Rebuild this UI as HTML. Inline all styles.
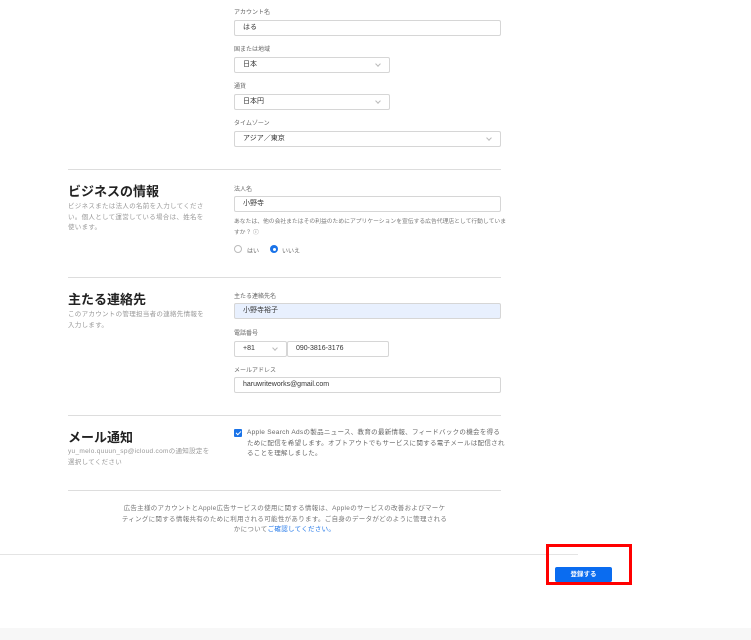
<!DOCTYPE html>
<html><head><meta charset="utf-8"><style>
*{margin:0;padding:0;box-sizing:border-box}
body{width:751px;height:640px;background:#fff;position:relative;overflow:hidden;font-family:"Liberation Sans","Noto Sans CJK JP",sans-serif;color:#333}
.a{position:absolute;white-space:nowrap}
.lb{font-size:6px;color:#666}
.in{position:absolute;height:16px;border:1px solid #d6d6d6;border-radius:2px;font-size:7px;color:#333;padding-left:8px;line-height:14px;background:#fff}
.chev{position:absolute;right:9px;top:4px;width:4px;height:4px;border-right:1px solid #bbb;border-bottom:1px solid #bbb;transform:rotate(45deg)}
.hr{position:absolute;height:1px;background:#ddd}
.t{font-size:13px;font-weight:bold;color:#222}
.d{font-size:6.5px;color:#999;line-height:10.5px;letter-spacing:0.3px}
</style></head><body>
<div class="a lb" style="left:234px;top:7px">アカウント名</div>
<div class="in" style="left:234px;top:20px;width:267px">はる</div>
<div class="a lb" style="left:234px;top:44px">国または地域</div>
<div class="in" style="left:234px;top:57px;width:156px">日本<span class="chev"></span></div>
<div class="a lb" style="left:234px;top:81px">通貨</div>
<div class="in" style="left:234px;top:94px;width:156px">日本円<span class="chev"></span></div>
<div class="a lb" style="left:234px;top:118px">タイムゾーン</div>
<div class="in" style="left:234px;top:131px;width:267px">アジア／東京<span class="chev"></span></div>
<div class="hr" style="left:68px;top:169px;width:433px"></div>

<div class="a t" style="left:68px;top:181px">ビジネスの情報</div>
<div class="a d" style="left:68px;top:202px">ビジネスまたは法人の名前を入力してくださ<br>い。個人として運営している場合は、姓名を<br>使います。</div>
<div class="a lb" style="left:234px;top:184px">法人名</div>
<div class="in" style="left:234px;top:196px;width:267px">小野寺</div>
<div class="a d" style="left:234px;top:217px;color:#777;font-size:5.8px;letter-spacing:0">あなたは、他の会社またはその利益のためにアプリケーションを宣伝する広告代理店として行動していま<br>すか？ ⓘ</div>
<div class="a" style="left:234px;top:245px;width:8px;height:8px;border:1px solid #bbb;border-radius:50%"></div>
<div class="a lb" style="left:247px;top:246px">はい</div>
<div class="a" style="left:270px;top:245px;width:8px;height:8px;background:#1a73e8;border-radius:50%"><div style="position:absolute;left:2.5px;top:2.5px;width:3px;height:3px;background:#fff;border-radius:50%"></div></div>
<div class="a lb" style="left:282px;top:246px">いいえ</div>
<div class="hr" style="left:68px;top:277px;width:433px"></div>

<div class="a t" style="left:68px;top:289px">主たる連絡先</div>
<div class="a d" style="left:68px;top:310px">このアカウントの管理担当者の連絡先情報を<br>入力します。</div>
<div class="a lb" style="left:234px;top:291px">主たる連絡先名</div>
<div class="in" style="left:234px;top:303px;width:267px;background:#e8f0fe">小野寺裕子</div>
<div class="a lb" style="left:234px;top:328px">電話番号</div>
<div class="in" style="left:234px;top:341px;width:53px">+81<span class="chev"></span></div>
<div class="in" style="left:287px;top:341px;width:102px">090-3816-3176</div>
<div class="a lb" style="left:234px;top:365px">メールアドレス</div>
<div class="in" style="left:234px;top:377px;width:267px">haruwriteworks@gmail.com</div>
<div class="hr" style="left:68px;top:415px;width:433px"></div>

<div class="a t" style="left:68px;top:427px">メール通知</div>
<div class="a d" style="left:68px;top:447px">yu_melo.quuun_sp@icloud.comの通知設定を<br>選択してください</div>
<div class="a" style="left:234px;top:429px;width:8px;height:8px;background:#1a73e8;border-radius:1px"><div style="position:absolute;left:2.5px;top:0.5px;width:3px;height:5px;border-right:1.3px solid #fff;border-bottom:1.3px solid #fff;transform:rotate(45deg)"></div></div>
<div class="a d" style="left:247px;top:428px;color:#666">Apple Search Adsの製品ニュース、教育の最新情報、フィードバックの機会を得る<br>ために配信を希望します。オプトアウトでもサービスに関する電子メールは配信され<br>ることを理解しました。</div>
<div class="hr" style="left:68px;top:490px;width:433px"></div>

<div class="a d" style="left:118px;top:504px;width:333px;text-align:center;color:#777">広告主様のアカウントとApple広告サービスの使用に関する情報は、Appleのサービスの改善およびマーケ<br>ティングに関する情報共有のために利用される可能性があります。ご自身のデータがどのように管理される<br>かについて<span style="color:#1a73e8">ご確認してください。</span></div>
<div class="hr" style="left:0;top:554px;width:578px;background:#e4e4e4"></div>
<div class="a" style="left:555px;top:567px;width:57px;height:15px;background:#0a6cf0;border-radius:2px;color:#fff;font-size:6.5px;font-weight:bold;text-align:center;line-height:15px">登録する</div>
<div class="a" style="left:546px;top:544px;width:86px;height:41px;border:3px solid #f00"></div>
<div class="a" style="left:0;top:628px;width:751px;height:12px;background:#f7f7f7"></div>
</body></html>
